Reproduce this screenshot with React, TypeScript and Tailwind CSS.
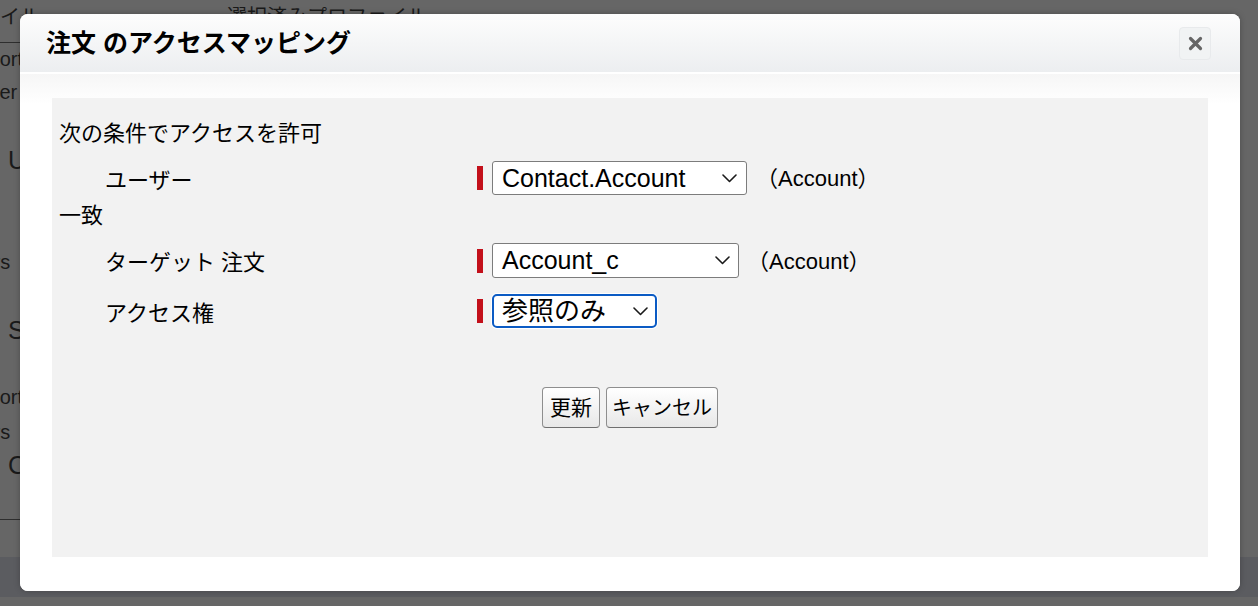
import React from "react";

function Chevron() {
  return (
    <svg width="15" height="9" viewBox="0 0 15 9" className="shrink-0">
      <polyline points="1,1 7.5,7.5 14,1" fill="none" stroke="#1a1a1a" strokeWidth="1.6" strokeLinecap="round" strokeLinejoin="round" />
    </svg>
  );
}

function RedBar() {
  return <div className="w-[6px] h-[24px] bg-[#c3101b] mr-[9px] shrink-0" />;
}

export default function App() {
  return (
    <div className="relative w-[1258px] h-[606px] overflow-hidden bg-[#666666] text-[#1a1a1a] font-['Liberation_Sans','Noto_Sans_CJK_JP',sans-serif]">
      {/* background page (under overlay) */}
      <div className="flex flex-col">
        <div className="mt-[5px] h-[24px] flex text-[20px] leading-[24px]">
          <span className="ml-[-80px] w-[200px] shrink-0">プロファイル</span>
          <span className="ml-[107px]">選択済みプロファイル</span>
        </div>
        <div className="mt-[13px] h-px w-[40px] bg-[#2e2e2e]" />
        <div className="mt-[4px] h-[24px] text-[20px] leading-[24px] ml-[-47px]">Support</div>
        <div className="mt-[9px] h-[24px] text-[20px] leading-[24px] ml-[-25px]">User</div>
        <div className="mt-[42px] h-[28px] text-[25px] leading-[28px] ml-[8px]">User</div>
        <div className="mt-[76px] h-[24px] text-[20px] leading-[24px] ml-[-42px]">Users</div>
        <div className="mt-[42px] h-[28px] text-[25px] leading-[28px] ml-[8px]">System</div>
        <div className="mt-[41px] h-[24px] text-[20px] leading-[24px] ml-[-47px]">Support</div>
        <div className="mt-[11px] h-[24px] text-[20px] leading-[24px] ml-[-42px]">Users</div>
        <div className="mt-[7px] h-[28px] text-[25px] leading-[28px] ml-[8px]">Custom</div>
        <div className="mt-[40px] h-px w-[40px] bg-[#2e2e2e]" />
        <div className="mt-[37px] h-[40px] bg-[#5b5c60]" />
      </div>

      {/* modal */}
      <div className="absolute left-[20px] top-[14px] w-[1220px] h-[577px] rounded-[8px] bg-white overflow-hidden shadow-[0_0_6px_rgba(0,0,0,0.25)] flex flex-col">
        <div className="h-[60px] shrink-0 flex items-center justify-between pl-[26px] pr-[29px] bg-linear-to-b from-[#fdfdfd] to-[#eceef0] border-b-2 border-white">
          <div className="text-[25px] font-bold text-black leading-none pt-[1px]">注文 のアクセスマッピング</div>
          <div className="w-[32px] h-[33px] rounded-[4px] bg-[#f1f3f4] border border-[#e8eaec] flex items-center justify-center">
            <svg width="15" height="15" viewBox="0 0 15 15">
              <path d="M2.5 2.5 L12.5 12.5 M12.5 2.5 L2.5 12.5" stroke="#666" strokeWidth="3.2" strokeLinecap="round" />
            </svg>
          </div>
        </div>
        <div className="flex-1 pt-[24px] px-[32px] bg-[linear-gradient(#f6f6f6,#ffffff_30px)]">
          <div className="h-[459px] bg-[#f2f2f2] px-[7px] pt-[18px] flex flex-col text-black">
            <div className="h-[36px] text-[22px] leading-[36px]">次の条件でアクセスを許可</div>

            <div className="mt-[9px] h-[34px] flex items-center">
              <div className="w-[418px] pl-[46px] text-[22px] leading-none pt-[5px]">ユーザー</div>
              <RedBar />
              <div className="w-[255px] h-[34px] bg-white border border-[#7c7c7c] rounded-[3px] flex items-center justify-between pl-[9px] pr-[9px]">
                <span className="text-[25px] leading-none">Contact.Account</span>
                <Chevron />
              </div>
              <span className="ml-[9px] text-[22px] leading-none pt-[2px]">（Account）</span>
            </div>

            <div className="mt-[3px] h-[36px] text-[22px] leading-[36px]">一致</div>

            <div className="mt-[9px] h-[35px] flex items-center">
              <div className="w-[418px] pl-[46px] text-[22px] leading-none pt-[5px]">ターゲット 注文</div>
              <RedBar />
              <div className="w-[247px] h-[35px] bg-white border border-[#7c7c7c] rounded-[3px] flex items-center justify-between pl-[9px] pr-[8px]">
                <span className="text-[25px] leading-none">Account_c</span>
                <Chevron />
              </div>
              <span className="ml-[8px] text-[22px] leading-none pt-[2px]">（Account）</span>
            </div>

            <div className="mt-[16px] h-[34px] flex items-center">
              <div className="w-[418px] pl-[46px] text-[22px] leading-none pt-[5px]">アクセス権</div>
              <RedBar />
              <div className="w-[165px] h-[34px] bg-white border-2 border-[#0b5bc4] rounded-[5px] flex items-center justify-between pl-[8px] pr-[7px] shadow-[0_0_0_1px_#ffffff]">
                <span className="text-[26px] leading-none">参照のみ</span>
                <Chevron />
              </div>
            </div>

            <div className="mt-[59px] flex justify-center gap-[6px]">
              <button className="w-[58px] h-[41px] flex items-center justify-center rounded-[4px] border border-[#8e8e8e] border-b-[#6f6f6f] bg-linear-to-b from-white to-[#e8e8e8] text-[21px] leading-none text-black">
                更新
              </button>
              <button className="w-[112px] h-[41px] flex items-center justify-center rounded-[4px] border border-[#8e8e8e] border-b-[#6f6f6f] bg-linear-to-b from-white to-[#e8e8e8] text-[20px] leading-none text-black">
                キャンセル
              </button>
            </div>
          </div>
        </div>
      </div>
    </div>
  );
}
